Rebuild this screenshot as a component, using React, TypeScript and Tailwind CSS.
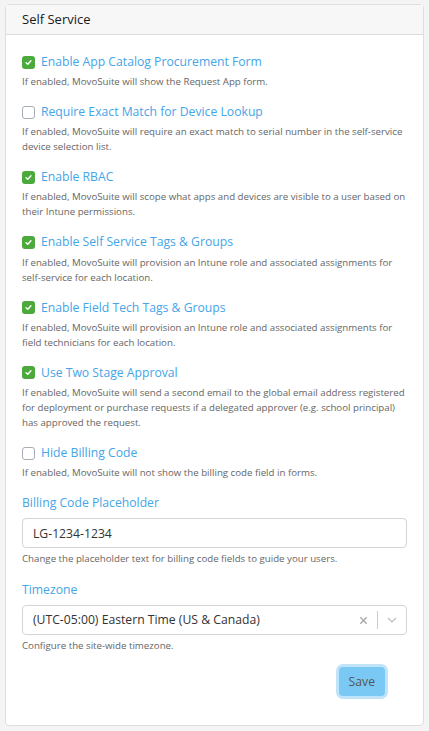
import { useState } from "react";

const options = [
  {
    label: "Enable App Catalog Procurement Form",
    help: "If enabled, MovoSuite will show the Request App form.",
    checked: true,
  },
  {
    label: "Require Exact Match for Device Lookup",
    help: "If enabled, MovoSuite will require an exact match to serial number in the self-service device selection list.",
    checked: false,
  },
  {
    label: "Enable RBAC",
    help: "If enabled, MovoSuite will scope what apps and devices are visible to a user based on their Intune permissions.",
    checked: true,
  },
  {
    label: "Enable Self Service Tags & Groups",
    help: "If enabled, MovoSuite will provision an Intune role and associated assignments for self-service for each location.",
    checked: true,
  },
  {
    label: "Enable Field Tech Tags & Groups",
    help: "If enabled, MovoSuite will provision an Intune role and associated assignments for field technicians for each location.",
    checked: true,
  },
  {
    label: "Use Two Stage Approval",
    help: "If enabled, MovoSuite will send a second email to the global email address registered for deployment or purchase requests if a delegated approver (e.g. school principal) has approved the request.",
    checked: true,
  },
  {
    label: "Hide Billing Code",
    help: "If enabled, MovoSuite will not show the billing code field in forms.",
    checked: false,
  },
];

function Check({ on }: { on: boolean }) {
  if (on) {
    return (
      <span className="flex h-[13px] w-[13px] shrink-0 items-center justify-center rounded-[3px] bg-[#4caa3c]">
        <svg viewBox="0 0 8 8" className="h-[7px] w-[7px]">
          <path d="M1.2 4.2 L3.2 6 L6.8 2" fill="none" stroke="white" strokeWidth="1.6" strokeLinecap="round" strokeLinejoin="round" />
        </svg>
      </span>
    );
  }
  return <span className="h-[13px] w-[13px] shrink-0 rounded-[3px] border border-[#a7adb5] bg-white" />;
}

export default function App() {
  const [code, setCode] = useState("LG-1234-1234");

  return (
    <div className="min-h-[731px] bg-[#f4f4f4] px-[5px] pt-[4px] font-['Open_Sans',sans-serif]">
      <div className="rounded-[4px] border border-[#dedede] bg-white">
        <div className="flex h-[30px] items-center border-b border-[#dcdcdc] bg-[#f7f7f7] px-[16px] text-[13px] text-[#1a1a1a]">
          Self Service
        </div>

        <div className="px-[16px] pb-[29px] pt-[17px]">
          {options.map((o) => (
            <div key={o.label} className="mb-[13.2px]">
              <div className="flex h-[20px] items-center gap-[6px]">
                <Check on={o.checked} />
                <span className="text-[12.2px] text-[#45a5e8]">{o.label}</span>
              </div>
              <p className="mt-[2px] text-[9.7px] leading-[15px] text-[#666]">{o.help}</p>
            </div>
          ))}

          <div className="mt-[11.5px] text-[12.2px] leading-[20px] text-[#45a5e8]">Billing Code Placeholder</div>
          <input
            value={code}
            onChange={(e) => setCode(e.target.value)}
            className="mt-[5px] h-[30px] w-full rounded-[4px] border border-[#d4d4d4] px-[10px] text-[12.2px] text-[#333] outline-none"
          />
          <p className="mt-[3px] text-[9.7px] leading-[15px] text-[#666]">
            Change the placeholder text for billing code fields to guide your users.
          </p>

          <div className="mt-[14px] text-[12.2px] leading-[20px] text-[#45a5e8]">Timezone</div>
          <div className="mt-[5px] flex h-[30px] items-center rounded-[4px] border border-[#d4d4d4] pl-[10px] text-[12.2px] text-[#333]">
            <span className="flex-1">(UTC-05:00) Eastern Time (US &amp; Canada)</span>
            <span className="px-[9px] text-[#aaa]">
              <svg viewBox="0 0 10 10" className="h-[9px] w-[9px]">
                <path d="M1.5 1.5 L8.5 8.5 M8.5 1.5 L1.5 8.5" fill="none" stroke="currentColor" strokeWidth="1.6" />
              </svg>
            </span>
            <span className="h-[18px] w-px bg-[#ccc]" />
            <span className="px-[9px] text-[#bbb]">
              <svg viewBox="0 0 10 6" className="h-[6px] w-[10px]">
                <path d="M1 1 L5 5 L9 1" fill="none" stroke="currentColor" strokeWidth="1.2" />
              </svg>
            </span>
          </div>
          <p className="mt-[3px] text-[9.7px] leading-[15px] text-[#666]">Configure the site-wide timezone.</p>

          <div className="mt-[14px] flex justify-end pr-[22px]">
            <button className="h-[29px] rounded-[4px] bg-[#7ac9f4] px-[10px] text-[12.2px] text-[#555] ring-[3px] ring-[#bfe3f8]">
              Save
            </button>
          </div>
        </div>
      </div>
    </div>
  );
}
